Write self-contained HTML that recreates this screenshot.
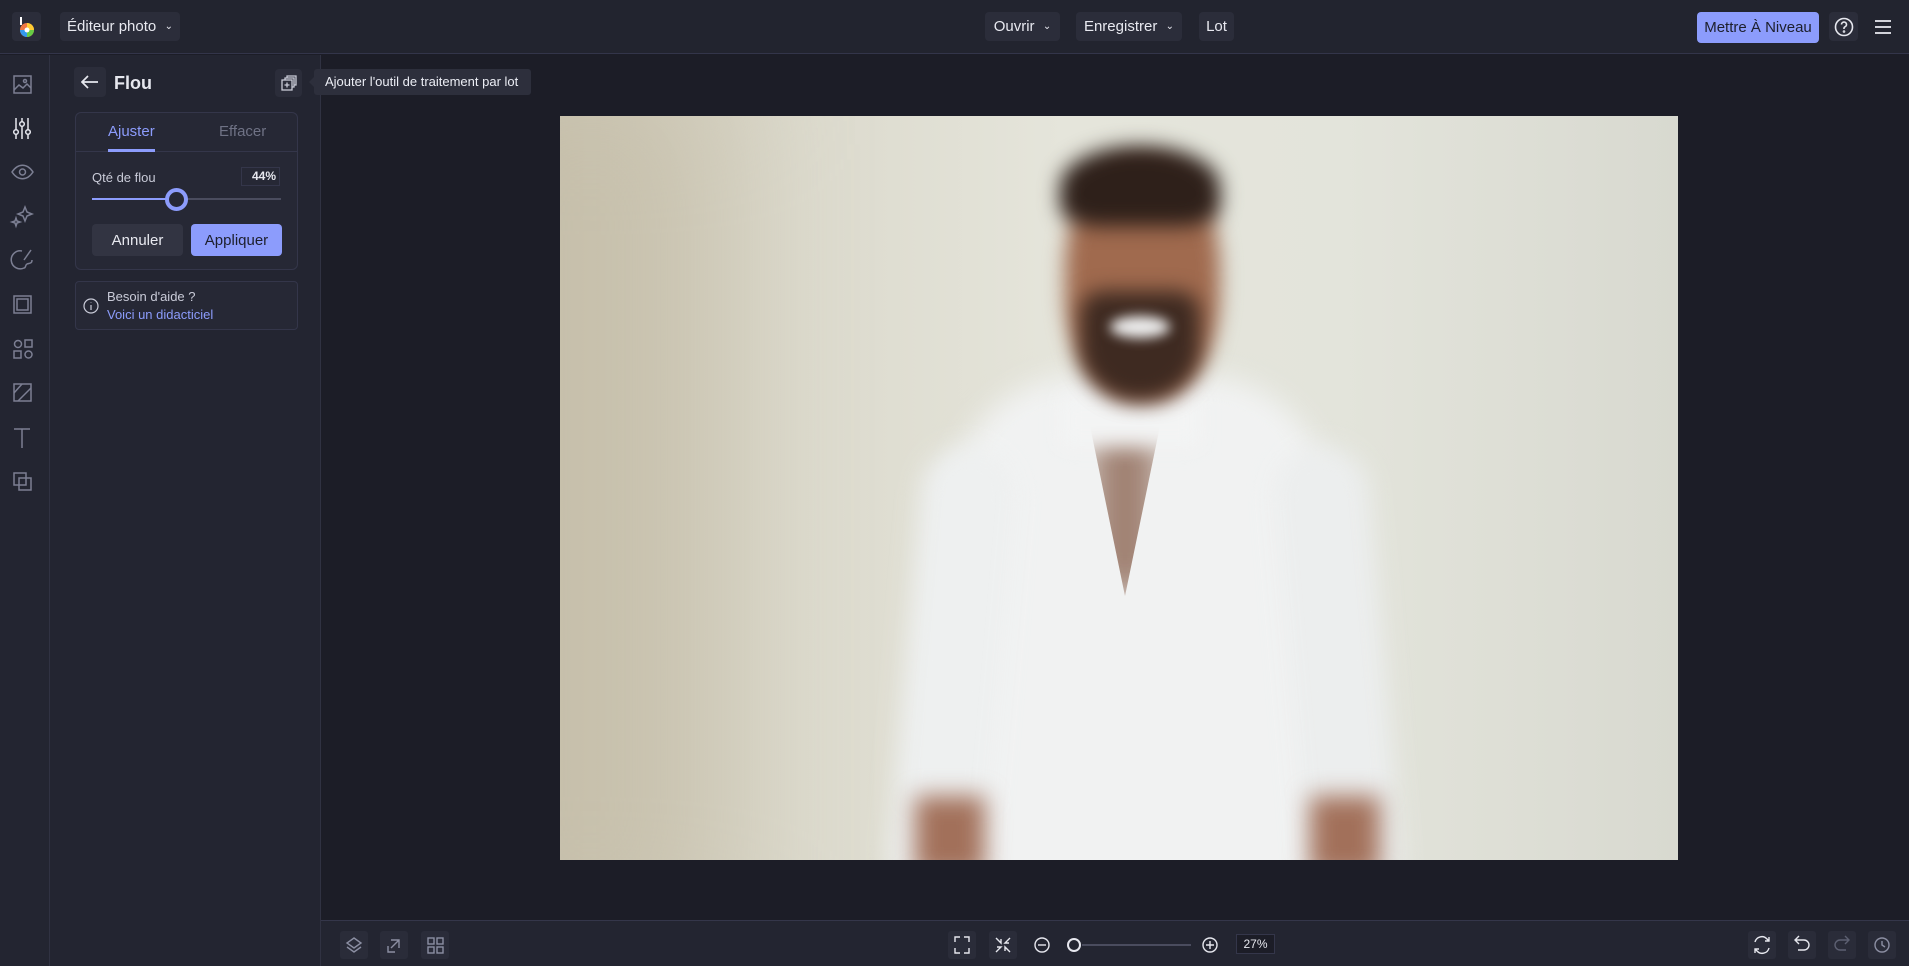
<!DOCTYPE html><html><head><meta charset="utf-8"><style>
*{box-sizing:border-box;margin:0;padding:0}
body{width:1909px;height:966px;background:#1c1d27;font-family:"Liberation Sans",sans-serif;color:#e6e7ee;position:relative;overflow:hidden;font-size:14px}
.a{position:absolute}
.btn{position:absolute;background:#2b2d3a;border-radius:4px;display:flex;align-items:center;justify-content:center;font-size:15px;color:#e8e9f0}
svg{display:block}
</style></head><body>
<div class="a" style="left:0;top:0;width:1909px;height:54px;background:#22242f;border-bottom:1px solid #33354a"></div>
<div class="btn" style="left:12px;top:12px;width:29px;height:29px">
<svg width="20" height="22" viewBox="0 0 20 22"><line x1="4" y1="1" x2="4" y2="9" stroke="#fff" stroke-width="2"/><circle cx="10" cy="14" r="7" fill="#e74"/><path d="M10 14 L10 7 A7 7 0 0 1 17 14Z" fill="#fc3"/><path d="M10 14 L17 14 A7 7 0 0 1 10 21Z" fill="#6c4"/><path d="M10 14 L10 21 A7 7 0 0 1 3 14Z" fill="#39e"/><circle cx="10" cy="14" r="2.5" fill="#fff"/></svg></div>
<div class="btn" style="left:60px;top:12px;width:120px;height:29px">Éditeur photo&nbsp;&nbsp;<span style="font-size:10px">&#8964;</span></div>
<div class="btn" style="left:985px;top:12px;width:75px;height:29px">Ouvrir&nbsp;&nbsp;<span style="font-size:10px">&#8964;</span></div>
<div class="btn" style="left:1076px;top:12px;width:106px;height:29px">Enregistrer&nbsp;&nbsp;<span style="font-size:10px">&#8964;</span></div>
<div class="btn" style="left:1199px;top:12px;width:35px;height:29px">Lot</div>
<div class="btn" style="left:1697px;top:12px;width:122px;height:31px;background:#8c9cfc;color:#1d1f2c">Mettre À Niveau</div>
<div class="btn" style="left:1829px;top:12px;width:29px;height:29px"><svg width="20" height="20" viewBox="0 0 20 20" fill="none" stroke="#e6e7ee" stroke-width="1.6"><circle cx="10" cy="10" r="8.5"/><path d="M7.5 7.5a2.5 2.5 0 1 1 3.5 2.3c-.7.3-1 .8-1 1.5v.7"/><circle cx="10" cy="14.5" r=".5"/></svg></div>
<div class="btn" style="left:1868px;top:12px;width:29px;height:29px;background:none"><svg width="20" height="16" viewBox="0 0 20 16" stroke="#e6e7ee" stroke-width="1.8"><line x1="2" y1="2" x2="18" y2="2"/><line x1="2" y1="8" x2="18" y2="8"/><line x1="2" y1="14" x2="18" y2="14"/></svg></div>
<div class="a" style="left:0;top:55px;width:50px;height:911px;background:#232531;border-right:1px solid #303242"></div>
<div class="a" style="left:50px;top:55px;width:271px;height:911px;background:#232531;border-right:1px solid #303242"></div>
<svg class="a" style="left:0;top:55px" width="50" height="450" fill="none" stroke="#7c7f93" stroke-width="1.5">
<rect x="14" y="21" width="17" height="17"/><path d="M14 35l5-5 4 3 4-4 4 4"/><circle cx="25" cy="26" r="1.5"/>
<g stroke="#e6e7ee"><line x1="16" y1="63" x2="16" y2="84"/><line x1="22" y1="63" x2="22" y2="84"/><line x1="28" y1="63" x2="28" y2="84"/><circle cx="16" cy="77" r="2.3" fill="#232531"/><circle cx="22" cy="69" r="2.3" fill="#232531"/><circle cx="28" cy="77" r="2.3" fill="#232531"/></g>
<path d="M12 117c6-9 15-9 21 0c-6 9-15 9-21 0z"/><circle cx="22.5" cy="117" r="3"/>
<path d="M25 152l2 5 5 2-5 2-2 5-2-5-5-2 5-2z"/><path d="M16 163l1 3 3 1-3 1-1 3-1-3-3-1 3-1z"/>
<path d="M22 196a9 9 0 1 0 2 17c2 0 1-3 3-4s5 0 5-4"/><path d="M24 205l7-10"/>
<rect x="14" y="241" width="17" height="17"/><rect x="17" y="244" width="11" height="11"/>
<circle cx="18" cy="289" r="3.5"/><path d="M25 285h7v7h-7z"/><rect x="14" y="296" width="7" height="7"/><circle cx="28.5" cy="299.5" r="3.5"/>
<rect x="14" y="329" width="17" height="17"/><path d="M14 338l8-9M18 346l13-13"/>
<path d="M14 374h16M22 374v19"/>
<rect x="14" y="418" width="12" height="12"/><rect x="19" y="423" width="12" height="12"/>
</svg>
<div class="btn" style="left:74px;top:67px;width:32px;height:30px"><svg width="18" height="14" viewBox="0 0 18 14" fill="none" stroke="#e6e7ee" stroke-width="1.7"><path d="M17 7H2M7 1L1 7l6 6"/></svg></div>
<div class="a" style="left:114px;top:73px;font-size:18px;font-weight:bold">Flou</div>
<div class="btn" style="left:275px;top:69px;width:27px;height:28px"><svg width="16" height="16" viewBox="0 0 16 16" fill="none" stroke="#c9cbd8" stroke-width="1.3"><rect x="1" y="5" width="10" height="10"/><path d="M4 5V3h9v9h-2M6 3V1h9v9h-2"/><path d="M6 7.5v5M3.5 10h5"/></svg></div>
<div class="a" style="left:314px;top:69px;width:217px;height:26px;background:#2d2f3c;border-radius:3px;font-size:13px;line-height:26px;padding-left:11px;color:#eceef5">Ajouter l'outil de traitement par lot</div>
<div class="a" style="left:309px;top:77px;width:0;height:0;border:5px solid transparent;border-right-color:#2d2f3c;border-left:0"></div>
<div class="a" style="left:75px;top:112px;width:223px;height:158px;border:1px solid #34364a;border-radius:6px;background:#262835"></div>
<div class="a" style="left:75px;top:151px;width:223px;height:1px;background:#34364a"></div>
<div class="a" style="left:108px;top:123px;font-size:15px;color:#8c9cfc">Ajuster</div>
<div class="a" style="left:108px;top:149px;width:47px;height:3px;background:#8c9cfc"></div>
<div class="a" style="left:219px;top:123px;font-size:15px;color:#6f7285">Effacer</div>
<div class="a" style="left:92px;top:170px;font-size:13px;color:#c9cbd8">Qté de flou</div>
<div class="a" style="left:241px;top:167px;width:39px;height:19px;border:1px solid #34364a;font-size:12px;text-align:right;padding-right:3px;line-height:17px;font-weight:bold">44%</div>
<div class="a" style="left:92px;top:198px;width:189px;height:2px;background:#4a4c5e"></div>
<div class="a" style="left:92px;top:198px;width:84px;height:2px;background:#8c9cfc"></div>
<div class="a" style="left:165px;top:188px;width:23px;height:23px;border-radius:50%;border:4px solid #8c9cfc;background:#262835"></div>
<div class="btn" style="left:92px;top:224px;width:91px;height:32px;background:#323442">Annuler</div>
<div class="btn" style="left:191px;top:224px;width:91px;height:32px;background:#8c9cfc;color:#1d1f2c">Appliquer</div>
<div class="a" style="left:75px;top:281px;width:223px;height:49px;border:1px solid #34364a;border-radius:4px;background:#262835"></div>
<svg class="a" style="left:83px;top:298px" width="16" height="16" fill="none" stroke="#c9cbd8" stroke-width="1.2"><circle cx="8" cy="8" r="7"/><path d="M8 7v5M8 4.5v.5"/></svg>
<div class="a" style="left:107px;top:289px;font-size:13px;color:#c9cbd8">Besoin d'aide ?</div>
<div class="a" style="left:107px;top:307px;font-size:13px;color:#8c9cfc">Voici un didacticiel</div>
<!-- photo -->
<div class="a" style="left:560px;top:116px;width:1118px;height:744px;overflow:hidden;background:linear-gradient(90deg,#cdc8b6 0%,#dcdacd 22%,#e5e5db 45%,#e3e4db 70%,#d8d9d0 100%)">
 <div class="a" style="left:-100px;top:-50px;width:260px;height:900px;background:#bfb69f;filter:blur(70px);opacity:.5"></div>
 <div class="a" style="left:390px;top:260px;width:380px;height:560px;background:#f1f2f2;border-radius:130px 130px 20px 20px;filter:blur(14px)"></div>
 <div class="a" style="left:345px;top:330px;width:95px;height:460px;background:#eef0f0;border-radius:50px;filter:blur(12px);transform:rotate(5deg)"></div>
 <div class="a" style="left:730px;top:330px;width:95px;height:460px;background:#eceeee;border-radius:50px;filter:blur(12px);transform:rotate(-5deg)"></div>
 <div class="a" style="left:530px;top:310px;width:70px;height:170px;background:#8a6350;filter:blur(18px);clip-path:polygon(0 0,100% 0,50% 100%);opacity:.8"></div>
 <div class="a" style="left:500px;top:280px;width:140px;height:50px;background:#f3f4f4;filter:blur(10px)"></div>
 <div class="a" style="left:505px;top:45px;width:155px;height:240px;background:#a06a4e;border-radius:45%;filter:blur(10px)"></div>
 <div class="a" style="left:500px;top:30px;width:160px;height:80px;background:#2e201a;border-radius:50% 50% 25% 25%;filter:blur(10px)"></div>
 <div class="a" style="left:520px;top:175px;width:120px;height:110px;background:#3e2a21;border-radius:20% 20% 50% 50%;filter:blur(10px)"></div>
 <div class="a" style="left:550px;top:200px;width:60px;height:22px;background:#eee;border-radius:50%;filter:blur(6px)"></div>
 <div class="a" style="left:355px;top:680px;width:70px;height:80px;background:#a2705a;filter:blur(12px)"></div>
 <div class="a" style="left:750px;top:680px;width:70px;height:80px;background:#a2705a;filter:blur(12px)"></div>
</div>
<div class="a" style="left:321px;top:920px;width:1588px;height:46px;background:#232531;border-top:1px solid #34364a"></div>
<svg class="a" style="left:321px;top:920px" width="1588" height="46" fill="none" stroke="#8c8fa3" stroke-width="1.4">
<g fill="#2a2c39" stroke="none"><rect x="19" y="11" width="28" height="28" rx="3"/><rect x="59" y="11" width="28" height="28" rx="3"/><rect x="100" y="11" width="28" height="28" rx="3"/><rect x="627" y="11" width="28" height="28" rx="3"/><rect x="668" y="11" width="28" height="28" rx="3"/><rect x="1427" y="11" width="28" height="28" rx="3"/><rect x="1467" y="11" width="28" height="28" rx="3"/><rect x="1507" y="11" width="28" height="28" rx="3"/><rect x="1547" y="11" width="28" height="28" rx="3"/></g>
<path d="M33 18l7 5-7 5-7-5zM26 27l7 5 7-5"/>
<path d="M67 26v6h7M70 20h8v8M70 28l8-8"/>
<rect x="107" y="18" width="6" height="6"/><rect x="116" y="18" width="6" height="6"/><rect x="107" y="27" width="6" height="6"/><rect x="116" y="27" width="6" height="6"/>
<g stroke="#e6e7ee"><path d="M634 22v-5h5M648 22v-5h-5M634 28v5h5M648 28v5h-5"/><path d="M675 18l5 5v-4M689 32l-5-5v4M689 18l-5 5h4M675 32l5-5h-4"/>
<circle cx="721" cy="25" r="7"/><path d="M717 25h8"/><line x1="761" y1="25" x2="870" y2="25" stroke="#4a4c5e" stroke-width="2"/><circle cx="753" cy="25" r="6" fill="#232531" stroke-width="2"/>
<circle cx="889" cy="25" r="7"/><path d="M885 25h8M889 21v8"/>
<path d="M1434 22a7 7 0 0 1 12-3l2 2M1448 28a7 7 0 0 1-12 3l-2-2M1448 17v4h-4M1434 33v-4h4"/>
<path d="M1475 20h8a5 5 0 0 1 0 10h-6M1478 16l-4 4 4 4"/></g>
<path d="M1527 20h-8a5 5 0 0 0 0 10h6M1524 16l4 4-4 4" stroke="#5d6072"/>
<circle cx="1561" cy="25" r="7"/><path d="M1561 21v4l3 2"/>
</svg>
<div class="a" style="left:1236px;top:934px;width:39px;height:20px;background:#1c1d27;border:1px solid #34364a;font-size:12px;text-align:center;line-height:18px">27%</div>
</body></html>
